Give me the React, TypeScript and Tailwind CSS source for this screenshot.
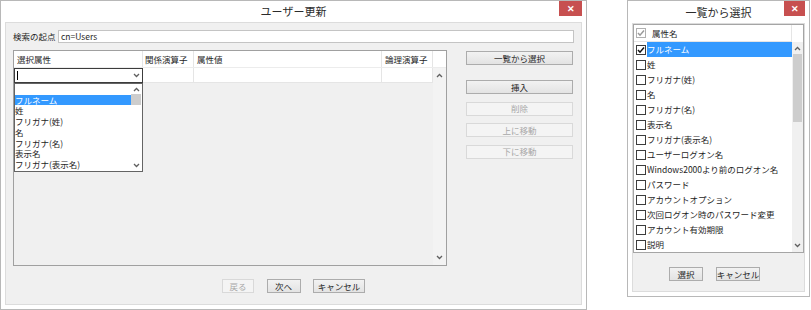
import React from "react";

function Chevron({ up = false }: { up?: boolean }) {
  return (
    <svg width="7" height="5" viewBox="0 0 7 5" className="block">
      <polyline
        points={up ? "1,4 3.5,1.5 6,4" : "1,1 3.5,3.5 6,1"}
        fill="none"
        stroke="#606060"
        strokeWidth="1.3"
      />
    </svg>
  );
}

function CloseBtn({ w }: { w: string }) {
  return (
    <div
      className={
        "absolute top-0 right-[4px] h-[15px] bg-[#c75050] flex items-center justify-center text-white text-[9px] font-bold " +
        w
      }
    >
      ✕
    </div>
  );
}

function Btn({
  label,
  w,
  disabled = false,
}: {
  label: string;
  w: string;
  disabled?: boolean;
}) {
  return (
    <div
      className={
        "h-[14px] flex items-center justify-center border whitespace-nowrap " +
        w +
        (disabled
          ? " border-[#d9d9d9] bg-[#f4f4f4] text-[#a8a8a8]"
          : " border-[#acacac] bg-gradient-to-b from-[#f2f2f2] to-[#e3e3e3] text-[#1e1e1e]")
      }
    >
      {label}
    </div>
  );
}

function Check({ checked = false, gray = false }: { checked?: boolean; gray?: boolean }) {
  return (
    <div
      className={
        "w-[10px] h-[10px] border bg-white flex items-center justify-center " +
        (gray ? "border-[#b0b0b0]" : "border-[#3c3c3c]")
      }
    >
      {checked && (
        <svg width="8" height="8" viewBox="0 0 8 8">
          <polyline
            points="1,4 3,6.2 7,1.5"
            fill="none"
            stroke={gray ? "#9a9a9a" : "#111"}
            strokeWidth="1.5"
          />
        </svg>
      )}
    </div>
  );
}

const dropItems = ["", "フルネーム", "姓", "フリガナ(姓)", "名", "フリガナ(名)", "表示名", "フリガナ(表示名)"];

const attrs = [
  "フルネーム",
  "姓",
  "フリガナ(姓)",
  "名",
  "フリガナ(名)",
  "表示名",
  "フリガナ(表示名)",
  "ユーザーログオン名",
  "Windows2000より前のログオン名",
  "パスワード",
  "アカウントオプション",
  "次回ログオン時のパスワード変更",
  "アカウント有効期限",
  "説明",
];

export default function App() {
  return (
    <div className="flex w-[811px] h-[310px] bg-white font-['Noto_Sans_CJK_JP',sans-serif] text-[8.5px] leading-none text-[#1e1e1e]">
      {/* ユーザー更新 */}
      <div className="w-[587px] h-[310px] border border-[#b8b8b8] bg-white flex flex-col">
        <div className="relative h-[21px] flex items-center justify-center text-[11px] text-[#2b2b2b]">
          ユーザー更新
          <CloseBtn w="w-[23px]" />
        </div>
        <div className="mx-[4px] h-[283px] border border-[#dcdcdc] bg-[#f0f0f0] flex flex-col">
          <div className="mt-[7px] h-[13px] flex items-center">
            <div className="ml-[7px] w-[45px]">検索の起点</div>
            <div className="w-[516px] h-[13px] border border-[#c4c4c4] bg-white flex items-center pl-[2px]">
              cn=Users
            </div>
          </div>

          <div className="mt-[7px] flex">
            <div className="relative ml-[7px] w-[434px] h-[216px] border border-[#a0a0a0] bg-[#f0f0f0] flex flex-col">
              <div className="h-[17px] bg-white flex border-b border-[#ececec]">
                <div className="w-[129px] border-r border-[#e5e5e5] flex items-center pl-[3px]">選択属性</div>
                <div className="w-[51px] border-r border-[#e5e5e5] flex items-center pl-[2px]">関係演算子</div>
                <div className="w-[188px] border-r border-[#e5e5e5] flex items-center pl-[3px]">属性値</div>
                <div className="w-[51px] border-r border-[#e5e5e5] flex items-center pl-[3px]">論理演算子</div>
                <div className="flex-1" />
              </div>
              <div className="flex-1 flex">
                <div className="w-[419px] flex flex-col">
                  <div className="h-[15px] flex">
                    <div className="w-[129px] border border-[#3c3c3c] bg-white flex items-center justify-between px-[2px]">
                      <div className="w-px h-[9px] bg-black" />
                      <Chevron />
                    </div>
                    <div className="w-[51px] border-r border-b border-[#e5e5e5] bg-white" />
                    <div className="w-[188px] border-r border-b border-[#e5e5e5] bg-white" />
                    <div className="w-[51px] border-r border-b border-[#e5e5e5] bg-white" />
                  </div>
                </div>
                <div className="flex-1 flex flex-col items-center justify-between py-[5px] bg-[#f3f3f3]">
                  <Chevron up />
                  <Chevron />
                </div>
              </div>

              {/* dropdown list */}
              <div className="absolute left-0 top-[32px] w-[129px] h-[89px] border border-[#646464] bg-white flex">
                <div className="flex-1 flex flex-col">
                  {dropItems.map((t, i) => (
                    <div
                      key={i}
                      className={
                        "h-[10.7px] flex items-center whitespace-nowrap " +
                        (t === "フルネーム" ? "bg-[#3399ff] text-white" : "")
                      }
                    >
                      {t}
                    </div>
                  ))}
                </div>
                <div className="relative w-[11px] flex flex-col items-center justify-between py-[3px]">
                  <Chevron up />
                  <div className="absolute top-[10px] left-0 w-[10px] h-[11px] bg-[#cdcdcd]" />
                  <Chevron />
                </div>
              </div>
            </div>

            <div className="ml-[19px] mt-[1px] w-[107px] flex flex-col">
              <Btn label="一覧から選択" w="w-[107px]" />
              <div className="mt-[15px] flex flex-col gap-[7.5px]">
                <Btn label="挿入" w="w-[107px]" />
                <Btn label="削除" w="w-[107px]" disabled />
                <Btn label="上に移動" w="w-[107px]" disabled />
                <Btn label="下に移動" w="w-[107px]" disabled />
              </div>
            </div>
          </div>

          <div className="mt-[13px] flex justify-center gap-[12.5px]">
            <Btn label="戻る" w="w-[32px]" disabled />
            <Btn label="次へ" w="w-[34px]" />
            <Btn label="キャンセル" w="w-[52px]" />
          </div>
        </div>
      </div>

      {/* 一覧から選択 */}
      <div className="ml-[40px] w-[183px] h-[297px] border border-[#b8b8b8] bg-white flex flex-col">
        <div className="relative h-[22px] flex items-center justify-center text-[11px] text-[#2b2b2b]">
          一覧から選択
          <CloseBtn w="w-[21px]" />
        </div>
        <div className="mx-[4px] h-[269px] border border-[#dcdcdc] bg-[#f0f0f0] flex flex-col">
          <div className="h-[229px] border border-[#a5a5a5] bg-white flex flex-col">
            <div className="h-[17px] flex">
              <div className="w-[158px] border-r border-b border-[#e5e5e5] flex items-center pl-[2px]">
                <Check checked gray />
                <div className="ml-[6px]">属性名</div>
              </div>
              <div className="flex-1" />
            </div>
            <div className="flex-1 flex">
              <div className="w-[158px] flex flex-col">
                {attrs.map((t, i) => (
                  <div key={t} className="h-[15px] flex items-center pl-[2px]">
                    <Check checked={i === 0} />
                    <div
                      className={
                        "ml-px h-full flex-1 flex items-center whitespace-nowrap " +
                        (i === 0 ? "bg-[#3399ff] text-white" : "")
                      }
                    >
                      {t}
                    </div>
                  </div>
                ))}
              </div>
              <div className="relative flex-1 bg-[#f0f0f0] flex flex-col items-center justify-between py-[4px]">
                <Chevron up />
                <div className="absolute top-[12px] left-px right-px h-[68px] bg-[#cdcdcd]" />
                <Chevron />
              </div>
            </div>
          </div>
          <div className="mt-[14px] ml-[36px] flex gap-[13px]">
            <Btn label="選択" w="w-[34px]" />
            <Btn label="キャンセル" w="w-[44px]" />
          </div>
        </div>
      </div>
    </div>
  );
}
